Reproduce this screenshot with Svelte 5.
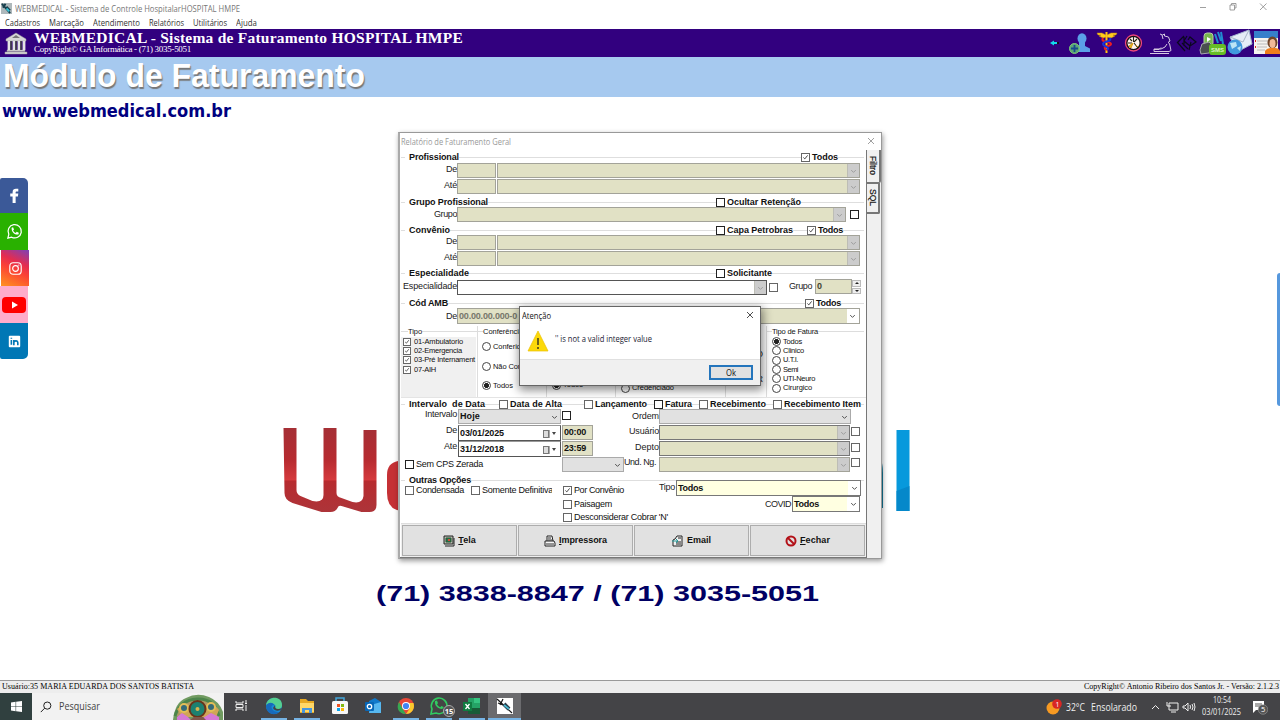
<script>
  const menus = [['Cadastros', 35], ['Marcação', 35], ['Atendimento', 47], ['Relatórios', 35], ['Utilitários', 34], ['Ajuda', 21]];
  const kinds = [['01-Ambulatorio', 49], ['02-Emergencia', 48], ['03-Pré Internament', 61], ['07-AIH', 22]];
  const bills = [['Todos', 19], ['Clinico', 21], ['U.T.I.', 15], ['Semi', 15], ['UTI-Neuro', 32], ['Cirurgico', 29]];
  const options = [['Data de Alta', 52], ['Lançamento', 52], ['Fatura', 27], ['Recebimento', 56], ['Recebimento Item', 77]];

  // Makes a label fill the given width: window chrome text is condensed, form text is letter-spaced.
  function fit(node, width) {
    const natural = node.getBoundingClientRect().width;
    if (/Open Sans|DejaVu/.test(getComputedStyle(node).fontFamily)) {
      node.style.transform = `scaleX(${width / natural})`;
      node.style.marginRight = width - natural + 'px';
    } else {
      node.style.letterSpacing = (width - natural) / node.textContent.length + 'px';
    }
  }
  function stretch(node, width) {
    node.style.transform = `scaleX(${width / node.getBoundingClientRect().width})`;
  }
</script>

{#snippet t(text, w)}<span class="t" use:fit={w}>{text}</span>{/snippet}
{#snippet cb(on = false, soft = false)}<i class="cb" class:soft={soft || on}>{#if on}<svg viewBox="0 0 10 10"><path d="M2 5l2 2 4-5" /></svg>{/if}</i>{/snippet}
{#snippet radio(on = false)}<i class="radio" class:on></i>{/snippet}
{#snippet chev()}<svg class="chev" viewBox="0 0 12 12"><path d="M3.500 5L6 7.500 8.500 5" /></svg>{/snippet}
{#snippet drop()}<span class="drop">{@render chev()}</span>{/snippet}
{#snippet pair(label, w)}
  <div class="row pair"><span class="lab">{@render t(label, w)}</span><div class="box"></div><div class="box">{@render drop()}</div></div>
{/snippet}

<div class="desktop">
  <header class="title">
    <svg class="appic" viewBox="0 0 12 12"><path fill="#aeb8bb" d="M0 0h12v12H0z" /><path d="M1 1l9 10M5 1l-3 4M6 4l4 4" stroke="#153e4c" stroke-width="2" /><path d="M6 6l3 3" stroke="#36c3d6" stroke-width="2" /></svg>
    {@render t('WEBMEDICAL - Sistema de Controle HospitalarHOSPITAL HMPE', 225)}
    <svg class="winbtns" viewBox="0 0 80 16" fill="none" stroke="#888" stroke-width=".8"><path d="M4 7.500h6M34 5h4.500v5H34zM35.500 5V3.500H40V8h-1.500M64 3.500l6.500 6.500M70.500 3.500L64 10" /></svg>
  </header>
  <nav class="menu">{#each menus as [m, w]}{@render t(m, w)}{/each}</nav>
  <div class="brand">
    <svg class="temple" viewBox="0 0 24 24"><path d="M2 8L12 2l10 6v2H2zM3 19h18v1.500H3zM1 21h22v2H1z" fill="#d8d8d8" stroke="#999" stroke-width=".5" /><path d="M5 10v9M10 10v9M15 10v9M20 10v9" stroke="#e4e4e4" stroke-width="2.800" /><path d="M7 10v9M12 10v9M17 10v9" stroke="#444" stroke-width="1.500" /><path d="M8 7l4-3 4 3z" fill="#777" /></svg>
    <div class="brandtext"><b>{@render t('WEBMEDICAL - Sistema de Faturamento HOSPITAL HMPE', 429)}</b><small>{@render t('CopyRight© GA Informática - (71) 3035-5051', 157)}</small></div>
    <svg class="tools" viewBox="1040 29 240 28">
      <path d="M1050 43l4-2.500v1.500h3v2h-3v1.500z" fill="#13d9ec" /><path d="M1057 43h2" stroke="#111" stroke-width="2" />
      <g fill="#5ba0e8"><ellipse cx="1082" cy="38.500" rx="4.500" ry="5.200" /><path d="M1079 41h6v5l5 2.500V52h-18v-2l7-4z" /></g>
      <circle cx="1074.500" cy="48.500" r="5" fill="#5aa777" stroke="#7dc77b" /><path d="M1074.500 45v7M1071 48.500h7" stroke="#17488e" stroke-width="1.800" />
      <path d="M1106 35l-4-2h-5l1 2h3l-2 1 4 2 3-1zM1107 35l4-2h6l-1 2h-3l2 1-4 2-4-1z" fill="#ffcd1c" stroke="#c18716" stroke-width=".5" /><path d="M1106.500 32v21" stroke="#ffc711" stroke-width="2" /><path d="M1103 38c-3 5 8 3 8 6s-8 1-6 5l3 1" fill="none" stroke="#ee1c22" stroke-width="2" /><path d="M1110 38c2 4-7 3-7 6s8 3 4 6" fill="none" stroke="#1635dc" stroke-width="2" />
      <circle cx="1133.500" cy="43" r="8" fill="#151015" stroke="#ec467c" stroke-width="1.300" /><circle cx="1133.500" cy="43" r="6" fill="#fff3ef" /><path d="M1133.500 37v5M1128 43h4M1134 43l4 5M1130 39l2 2M1137 39l-3 3" stroke="#221" stroke-width="1.100" /><path d="M1129 46l4-3-2 5zM1136 45l2 2" fill="#ddba20" stroke="#de9a12" />
      <path d="M1160 34l2.500 1 2-1v2l4 1 1.500 4-2 1.500 1.500 1 1.500 7-2 1h-15v-2.500h7l4-2 2-3M1150 53.500h19M1154 49.500h5l2-2M1162 35l1 4" fill="none" stroke="#d6cae2" stroke-width="1" />
      <path d="M1177 43l7-7M1178 43l7 8M1182 43l6 6M1184 37v9M1187 36l-3 5 6 5 6-4-6-5-2 3M1191 42l-2 8" fill="none" stroke="#0b071f" stroke-width="1.200" />
      <rect x="1204" y="33" width="9" height="13" rx="3" fill="#78b84d" stroke="#b6cda7" /><path d="M1207 37l4 2-4 3z" fill="#fff" /><path d="M1202 44l7-2 4 4-4 7-8 1-1-4z" fill="#4a4f50" stroke="#a6a8ac" /><path d="M1215 34l3 9M1218 32l3 9M1221 32l2 12" stroke="#218bd0" stroke-width="2" /><rect x="1209" y="44" width="17" height="11" rx="3" fill="#67bd25" /><text x="1211" y="52" font-size="6" font-weight="bold" fill="#dff5c5">SMS</text>
      <path d="M1230 37l19-7 3 14-15 8z" fill="#e5edf7" stroke="#a4b7d0" /><path d="M1230 37l13 5 6-12" fill="none" stroke="#a8b6c7" /><circle cx="1235" cy="47" r="7.500" fill="#4199dd" /><path d="M1230 43l6-1 1 4-5 3zM1237 48l4-2-1 5z" fill="#bce5f5" />
      <path d="M1254 31h24v23h-24z" fill="#f5f3ee" /><path d="M1254 31h24v7h-24z" fill="#367fcb" /><path d="M1257 41h14M1257 44h11M1257 47h10M1257 50h8" stroke="#bbb" /><path d="M1255 41h1M1255 47h1" stroke="#d22" stroke-width="2" /><ellipse cx="1272.500" cy="42.500" rx="5" ry="6" fill="#70452a" /><ellipse cx="1272.500" cy="43.500" rx="3" ry="4.500" fill="#f0b998" /><path d="M1265 54v-3q2-3 6-3h4q4 0 5 3v3z" fill="#ef7f1c" />
    </svg>
  </div>
  <div class="module"><span use:stretch={362}>Módulo de Faturamento</span></div>

  <main>
    <div class="site"><span class="t" use:fit={229}>www.webmedical.com.br</span></div>
    <aside>
      <div class="fb"><svg viewBox="0 0 20 20"><path d="M8 18v-7H5.500V8H8V6.500C8 3.800 9.500 3 11.500 3H14v2.800h-1.500c-1 0-1.300.3-1.300 1.200v1H14l-.4 3h-2.400v7z" fill="#fff" /></svg></div>
      <div class="wa"><svg viewBox="0 0 20 20"><path d="M3 17l1-4a7 7 0 1 1 3 3z" fill="none" stroke="#fff" stroke-width="1.300" /><path d="M7 6l1.500-.4 1 2.300-1 1c.6 1.300 1.500 2 2.800 2.600l1-1.200 2.200 1-.2 1.500c-3 2-8-2.500-7.300-6.800z" fill="#fff" /></svg></div>
      <div class="ig"><svg viewBox="0 0 20 20" fill="none" stroke="#fff" stroke-width="1.200"><rect x="4" y="4" width="12" height="12" rx="3.500" /><circle cx="10" cy="10" r="3" /><path d="M13 6.500h1" /></svg></div>
      <div class="yt"><svg viewBox="0 0 24 20"><rect y="2" width="24" height="16" rx="4" fill="#f00" /><path d="M10 6.500l6 3.500-6 3.500z" fill="#fff" /></svg></div>
      <div class="li"><svg viewBox="0 0 20 20"><rect x="4" y="4" width="12" height="12" rx="1" fill="#fff" /><path d="M6.700 8.500v5M6.700 6v1.200M9.300 14V8.500M9.500 10.500c.5-1.700 4-1.700 4 .7V14" fill="none" stroke="#0077b5" stroke-width="1.700" /></svg></div>
    </aside>
    <svg class="logo" viewBox="270 420 660 100">
      <defs><linearGradient id="r" x1="0" y1="0" x2="0" y2="1"><stop offset="0" stop-color="#a52f35" /><stop offset=".38" stop-color="#b72b30" /><stop offset=".62" stop-color="#d53a3d" /><stop offset=".63" stop-color="#b72b2f" /><stop offset="1" stop-color="#ad3439" /></linearGradient></defs>
      <path d="M283.500 428h13v62q0 4 4 6l12 5q11 2 11-6v-67h13v65q0 4 5 5l11 4q10 2 11-6v-66h13v75q0 7-7 7h-8l-20-6q-3-1-4 2-2 4-7 4h-9l-29-9q-8-3-8-10z" fill="url(#r)" />
      <path d="M410 461h-12q-11 2-11 14v18q0 17 15 18h8z" fill="#c53135" /><path d="M878 458h2q3 5 3 15v35h-5z" fill="#147a9a" />
      <path d="M896.500 430h13v81h-13z" fill="#0799dc" /><path d="M896.500 491l13-5v25h-13z" fill="#0588ca" />
    </svg>
    <div class="phone"><span use:stretch={443}>(71) 3838-8847 / (71) 3035-5051</span></div>
    <div class="edge"></div>
  </main>

  <section class="window">
    <div class="wtitle">{@render t('Relatório de Faturamento Geral', 110)}<svg viewBox="0 0 10 10"><path d="M2 2l6 6M8 2L2 8" /></svg></div>
    <div class="wbody">
      <div class="page">
        <div class="legend"><b>{@render t('Profissional', 50)}</b><div class="opt at801">{@render cb(true)}<b>{@render t('Todos', 26)}</b></div></div>
        {@render pair('De', 11)}{@render pair('Até', 13)}
        <div class="legend g2"><b>{@render t('Grupo Profissional', 79)}</b><div class="opt at716">{@render cb()}<b>{@render t('Ocultar Retenção', 74)}</b></div></div>
        <div class="row group"><span class="lab">{@render t('Grupo', 23)}</span><div class="box">{@render drop()}</div>{@render cb()}</div>
        <div class="legend g2"><b>{@render t('Convênio', 41)}</b><div class="opt at716">{@render cb()}<b>{@render t('Capa Petrobras', 66)}</b></div><div class="opt gap14">{@render cb(true)}<b>{@render t('Todos', 25)}</b></div></div>
        {@render pair('De', 11)}{@render pair('Até', 13)}
        <div class="legend g4"><b>{@render t('Especialidade', 60)}</b><div class="opt at716">{@render cb()}<b>{@render t('Solicitante', 45)}</b></div></div>
        <div class="row spec"><span class="lab">{@render t('Especialidade', 54)}</span><div class="box white">{@render drop()}</div>{@render cb(false, true)}<span class="lab">{@render t('Grupo', 23)}</span><div class="box num"><b>0</b></div><div class="spin"><i></i><i></i></div></div>
        <div class="legend g5"><b>{@render t('Cód AMB', 39)}</b><div class="opt at805">{@render cb(true)}<b>{@render t('Todos', 25)}</b></div></div>
        <div class="row amb"><span class="lab">{@render t('De', 11)}</span><div class="box"><b class="dim">{@render t('00.00.00.000-0', 58)}</b></div><div class="box light">{@render drop()}</div></div>

        <div class="panels">
          <div class="panel kinds"><h5>{@render t('Tipo', 14)}</h5><div class="list">{#each kinds as [k, w]}<div class="opt">{@render cb(true)}{@render t(k, w)}</div>{/each}</div></div>
          <div class="panel conf"><h5>{@render t('Conferência', 40)}</h5><div class="opt">{@render radio()}{@render t('Conferido', 32)}</div><div class="opt">{@render radio()}{@render t('Não Conferido', 47)}</div><div class="opt">{@render radio(true)}{@render t('Todos', 20)}</div></div>
          <div class="panel low"><div class="opt">{@render radio(true)}{@render t('Todos', 20)}</div></div>
          <div class="panel low cred"><div class="opt">{@render radio()}{@render t('Credenciado', 42)}</div></div>
          <div class="panel letters"><span>O</span><span>R</span></div>
          <div class="panel bills"><h5>{@render t('Tipo de Fatura', 46)}</h5>{#each bills as [k, w], i}<div class="opt">{@render radio(i === 0)}{@render t(k, w)}</div>{/each}</div>
        </div>

        <div class="legend dates"><b>{@render t('Intervalo\u00a0 de Data', 76)}</b>{#each options as [o, w], i}<div class="opt o{i}">{@render cb(false, i !== 2)}<b>{@render t(o, w)}</b></div>{/each}</div>
        <div class="row range"><span class="lab up">{@render t('Intervalo', 32)}</span><div class="box gray"><b>{@render t('Hoje', 20)}</b>{@render chev()}</div>{@render cb()}<span class="lab">{@render t('Ordem', 27)}</span><div class="box gray">{@render chev()}</div></div>
        {#each [['De', 11, '03/01/2025', '00:00', 'Usuário', 30], ['Ate', 13, '31/12/2018', '23:59', 'Depto', 24]] as [a, aw, date, time, b, bw]}
          <div class="row date"><span class="lab up">{@render t(a, aw)}</span><div class="box white"><b>{@render t(date, 44)}</b><i class="cal"></i><i class="tri"></i></div><div class="box tm"><b>{@render t(time, 22)}</b></div><span class="lab">{@render t(b, bw)}</span><div class="box dark">{@render drop()}</div>{@render cb(false, true)}</div>
        {/each}
        <div class="row cps"><div class="opt">{@render cb()}{@render t('Sem CPS Zerada', 67)}</div><div class="box gray">{@render chev()}</div><span class="lab">{@render t('Und. Ng.', 32)}</span><div class="box">{@render drop()}</div>{@render cb(false, true)}</div>
        <div class="legend last"><b>{@render t('Outras Opções', 62)}</b></div>
        <div class="row out1"><div class="opt">{@render cb(false, true)}{@render t('Condensada', 48)}</div><div class="opt">{@render cb(false, true)}{@render t('Somente Definitiva', 71)}</div><div class="opt">{@render cb(true)}{@render t('Por Convênio', 50)}</div><span class="lab">{@render t('Tipo', 16)}</span><div class="box yellow"><b>{@render t('Todos', 25)}</b>{@render chev()}</div></div>
        <div class="row out2"><div class="opt">{@render cb(false, true)}{@render t('Paisagem', 38)}</div><span class="lab">{@render t('COVID', 26)}</span><div class="box yellow"><b>{@render t('Todos', 25)}</b>{@render chev()}</div></div>
        <div class="row out3"><div class="opt">{@render cb(false, true)}{@render t("Desconsiderar Cobrar 'N'", 94)}</div></div>
        <div class="buttons">
          <button><svg viewBox="0 0 12 12"><path d="M1 1h9v8H1z" fill="#b9bbb0" stroke="#222" /><path d="M3 3h5v4H3z" fill="#27754f" stroke="#275b35" /><path d="M5 4h2v2H5z" fill="#d74a35" /><path d="M2 11h9V3" fill="none" stroke="#222" /></svg><span><u>T</u>ela</span></button>
          <button><svg viewBox="0 0 12 12"><path d="M3 6V1h5l1 5M1 6h9l1 2v3H1z" fill="#f5f5f5" stroke="#222" /><path d="M4 3h3M4 5h4M2 9h8" stroke="#333" /></svg><span class="t" use:fit={48}><u>I</u>mpressora</span></button>
          <button><svg viewBox="0 0 12 12"><path d="M3 4l2-3h5v10H1V5z" fill="#eee" stroke="#222" /><path d="M4 7h5M4 9h5M6 3h3" fill="none" stroke="#222" /><path d="M0 6h5M4 4l2 2-2 2" fill="none" stroke="#269b9a" /></svg><span>{@render t('Email', 24)}</span></button>
          <button><svg viewBox="0 0 12 12"><circle cx="6" cy="6" r="4.500" fill="none" stroke="#b31118" stroke-width="2" /><path d="M3 3l6 6" stroke="#b31118" stroke-width="2" /></svg><span class="t" use:fit={30}><u>F</u>echar</span></button>
        </div>
      </div>
      <div class="tabs"><div class="tab active"><span>Filtro</span></div><div class="tab"><span>SQL</span></div></div>
    </div>
  </section>

  <section class="dialog">
    <div class="dtitle">{@render t('Atenção', 29)}<svg viewBox="0 0 10 10"><path d="M2 2l6 6M8 2L2 8" /></svg></div>
    <div class="msg"><svg viewBox="0 0 22 22"><path d="M11 1l10 20H1z" fill="#fcd90a" stroke="#edc000" stroke-width=".7" /><path d="M11 8v7M11 17v2" stroke="#222" stroke-width="1.300" /></svg>{@render t("'' is not a valid integer value", 97)}</div>
    <div class="foot"><button>{@render t('Ok', 10)}</button></div>
  </section>

  <div class="status"><div>{@render t('Usuário:35 MARIA EDUARDA DOS SANTOS BATISTA', 192)}</div><div>{@render t('CopyRight© Antonio Ribeiro dos Santos Jr. - Versão: 2.1.2.3', 195)}</div></div>
  <footer>
    <div class="start"><svg viewBox="0 0 12 12" fill="#fff"><path d="M0 1.500l5-.7v4.800H0zM5.600.7L12 0v5.600H5.600zM0 6.200h5v4.900l-5-.7zM5.600 6.200H12V12l-6.400-.8z" /></svg></div>
    <div class="search"><svg class="mag" viewBox="0 0 12 12"><circle cx="7.300" cy="4.600" r="3.600" fill="none" stroke="#222" /><path d="M4.700 7.200L.8 11.100" stroke="#222" /></svg>{@render t('Pesquisar', 41)}
      <svg class="scene" viewBox="0 0 52 26"><path d="M1 26Q3 8 14 4 25-2 37 3q10 4 14 15v8z" fill="#719b61" /><path d="M3 22Q8 6 25 5t22 17" fill="#ac9963" stroke="#4c854b" stroke-width="3" /><path d="M5 15q8-7 15-3 5-8 14 0 8-4 13 4l-3 7H10z" fill="#d0a557" /><g stroke="#795b28"><circle cx="12" cy="14" r="4" fill="#356b78" stroke="#e3be59" stroke-width="2" /><circle cx="39" cy="13" r="4" fill="#356b78" stroke="#e3be59" stroke-width="2" /><circle cx="25.500" cy="15" r="8" fill="#1d8170" stroke="#69351a" stroke-width="2" /></g><circle cx="25.500" cy="15" r="2" fill="#d8b550" /><path d="M5 23l5-4 6 4 3 3H5zM31 24l8-5 8 4v3H31z" fill="#d579d6" /><path d="M18 26l4-3h9l3 3z" fill="#81574b" /></svg>
    </div>
    <div class="apps">
      <div><svg viewBox="0 0 20 20" fill="none" stroke="#eee"><path d="M5 5v2h7V5M5 15v-2h7v2M5 8.500h7v3H5zM15 4v3M15 9v6M14 7.500h2" /></svg></div>
      <div class="run"><svg viewBox="0 0 20 20"><circle cx="10" cy="10" r="8" fill="#168bd5" /><path d="M2 9C4-1 18 0 18 9c0 5-6 5-7 3 3-3-4-7-9-3" fill="#55cf91" /><path d="M2 10c2-4 7-4 8-1-5 0-2 8 5 7-5 5-13 1-13-6" fill="#176abc" /><path d="M11 9c-1 4 3 5 7 3-1 3-7 4-9 0z" fill="#444" /></svg></div>
      <div class="run"><svg viewBox="0 0 20 20"><path d="M3 3h6l2 2h6v12H3z" fill="#e7a822" /><path d="M3 7h14v9H3z" fill="#ffd767" /><path d="M5 17v-5h10v5h-3v-3H8v3z" fill="#4696dd" /></svg></div>
      <div><svg viewBox="0 0 20 20"><path d="M6 6V2h8v4" fill="none" stroke="#43a6dc" stroke-width="1.500" /><rect x="2" y="5" width="16" height="13" rx="1.500" fill="#f7f7f7" /><path d="M7 8h3v3H7z" fill="#f05323" /><path d="M11 8h3v3h-3z" fill="#80b913" /><path d="M7 12h3v3H7z" fill="#05a5ee" /><path d="M11 12h3v3h-3z" fill="#ffba08" /></svg></div>
      <div><svg viewBox="0 0 20 20"><path d="M6 5l6-3 6 4v11H6z" fill="#1179ca" /><path d="M8 9l10-3v11H6z" fill="#57b7ef" /><rect x="2" y="6" width="9" height="9" rx="1" fill="#0867b7" /><circle cx="6.500" cy="10.500" r="2.200" fill="none" stroke="#fff" stroke-width="1.300" /></svg></div>
      <div class="run"><svg viewBox="0 0 20 20"><circle cx="10" cy="10" r="8" fill="#e84738" /><path d="M3 6l5 9 2 3c-8 0-10-7-7-12" fill="#36a852" /><path d="M10 7h7.500c2 6-2 11-7.500 11l4-6z" fill="#fbc92d" /><circle cx="10" cy="10" r="4" fill="#fff" /><circle cx="10" cy="10" r="3.100" fill="#4285f4" /></svg></div>
      <div class="run"><svg viewBox="0 0 20 20"><path d="M2 18l1-5a7.800 7.800 0 1 1 4 4z" fill="#454545" stroke="#31cc61" stroke-width="1.600" /><path d="M6 5l2-.4 1 2.600-1 1c.7 1.500 1.800 2.300 3.300 3l1-1.300 2.400 1.200c0 4-10 1-8.700-6.100z" fill="#31cc61" /></svg><em>15</em></div>
      <div class="run"><svg viewBox="0 0 20 20"><path d="M6 2h12v16H6z" fill="#25a366" /><path d="M12 2h6v5h-6z" fill="#36c481" /><path d="M6 12h12v6H6z" fill="#185c37" /><path d="M1 6h9v9H1z" fill="#107c41" /><path d="M3.500 8l4 5M7.500 8l-4 5" stroke="#fff" stroke-width="1.300" /></svg></div>
      <div class="run active"><svg viewBox="0 0 20 20"><path d="M2 2h16v16H2z" fill="#fff" /><path d="M2 3l15 14M8 3L5 9M3 7l5 2" stroke="#171717" stroke-width="1.200" /><path d="M9 8l5 5" stroke="#293b48" stroke-width="4" /><path d="M9 9l5 4" stroke="#49b9d0" stroke-width="1.700" /></svg></div>
    </div>
    <div class="tray">
      <svg class="sun" viewBox="0 0 16 16"><circle cx="7" cy="9" r="6.500" fill="#f79a22" /><circle cx="11" cy="5" r="4.800" fill="#d82624" /><text x="9.600" y="7.500" font-size="7" fill="#fff">1</text></svg>
      {@render t('32°C', 19)}<span class="wx">{@render t('Ensolarado', 46)}</span>
      <svg class="sys" viewBox="0 0 46 14" fill="none" stroke="#eee"><path d="M1 9l3.500-3.500L8 9M18 3h9v7h-9zM16 2v4h4M20 12h5M32 6h2l3-3v8l-3-3h-2zM39 5q1 2 0 4M41 4q2 3 0 6M43 3q2 4 0 8" /></svg>
      <div class="clock"><div>{@render t('10:54', 18)}</div><div>{@render t('03/01/2025', 39)}</div></div>
      <div class="note"><svg viewBox="0 0 16 16"><path d="M1 2h11v9H4l-3 3z" fill="#fff" /><path d="M3 5h7M3 7h7" stroke="#555" /><circle cx="11" cy="10.500" r="4.800" fill="#555" stroke="#aaa" stroke-width=".5" /><text x="9" y="13.300" font-size="7.500" fill="#fff">5</text></svg></div>
    </div>
  </footer>
</div>

<style>
  :global(body) { overflow: hidden; }
  * { box-sizing: border-box; }
  .desktop { position: relative; width: 1280px; height: 720px; display: flex; flex-direction: column; background: #fff; font-family: "Liberation Sans", sans-serif; color: #111; overflow: hidden; line-height: 1; }
  .desktop svg { display: block; flex: none; }
  .t { white-space: nowrap; display: inline-block; flex: none; transform-origin: left; }
  .title { height: 15px; display: flex; align-items: center; gap: 3px; font: 9px/1 "Open Sans", sans-serif; color: #777; padding-top: 1px; }
  .appic { width: 11px; height: 11px; margin-left: 1px; }
  .winbtns { width: 80px; height: 16px; margin-left: auto; }
  .desktop .winbtns { margin-right: 4px; }
  .menu { height: 14px; display: flex; align-items: center; gap: 9px; padding-left: 5px; font: 9px/1 "Open Sans", sans-serif; color: #333; }
  .brand { height: 28px; background: #32007f; display: flex; color: #fff; font-family: "Liberation Serif", serif; padding-left: 4px; }
  .temple { width: 24px; height: 24px; margin-top: 2px; }
  .brandtext { display: flex; flex-direction: column; padding-left: 6px; }
  .brandtext b { font-size: 15.5px; line-height: 17px; height: 16px; }
  .brandtext small { font-size: 9px; line-height: 9px; }
  .tools { width: 240px; height: 28px; margin-left: auto; font-family: "Liberation Sans", sans-serif; }
  .module { height: 40px; background: #a6c9ef; color: #fff; font: bold 32.5px/39px "Liberation Sans", sans-serif; padding-left: 3px; text-shadow: 1px 2px 1px #777; }
  .module span, .phone span { display: inline-block; transform-origin: left; white-space: nowrap; }
  main { flex: 1; position: relative; }
  .site { font: bold 17px/20px "DejaVu Sans", sans-serif; color: #000080; padding: 4px 0 0 2px; height: 81px; }
  aside { width: 29px; }
  aside div { width: 28px; height: 36px; display: flex; align-items: center; justify-content: center; }
  aside svg { width: 19px; height: 19px; }
  .fb { background: #3b5998; height: 35px; border-top-right-radius: 5px; border-top-left-radius: 2px; }
  .wa { background: #29b100; height: 37px; }
  .ig { margin-left: 1px; background: linear-gradient(25deg, #ff941f, #fb4135 45%, #e42c50 65%, #7c42b7); }
  .yt { background: #ffaccb; height: 37px; }
  .yt svg { width: 24px; height: 20px; }
  .li { background: #0077b5; border-radius: 0 0 5px 2px; }
  .logo { position: absolute; left: 270px; top: 323px; width: 660px; height: 100px; }
  .phone { position: absolute; left: 376px; top: 485px; font: bold 22px/24px "Liberation Sans", sans-serif; color: #000064; }
  .edge { position: absolute; right: 0; top: 176px; width: 3px; height: 133px; background: #5698dd; border-radius: 3px 0 0 3px; }

  .window { position: absolute; left: 398px; top: 132px; width: 484px; height: 427px; background: #f0f0f0; border: 1px solid #999; border-left: 2px solid #aaa; box-shadow: 1px 2px 5px #0006; display: flex; flex-direction: column; font-size: 9px; }
  .wtitle { height: 17px; background: #fff; display: flex; justify-content: space-between; align-items: center; padding: 0 5px 1px 1px; font: 9px/1 "Open Sans", sans-serif; color: #999; }
  .wtitle svg, .dtitle svg { width: 10px; height: 10px; fill: none; stroke: #888; stroke-width: .8; }
  .dtitle svg { stroke: #222; }
  .wbody { flex: 1; display: flex; }
  .page { width: 467px; padding-top: 2px; padding-left: 1px; background: #fff; border-right: 1px solid #777; border-bottom: 1px solid #777; }
  .legend { height: 11px; display: flex; align-items: center; padding-left: 4px; background: linear-gradient(#dedede, #dedede) 0 50% / 463px 1px no-repeat; position: relative; }
  .legend > b, .legend .opt { background: #fff; padding-left: 4px; z-index: 1; }
  .legend .opt { padding-left: 0; margin-left: auto; }
  .g2 { height: 10px; margin-top: 2px; }
  .g4 { margin-top: 1px; height: 11px; }
  .g5 { margin-top: 3px; height: 10px; }
  .at801 { margin-right: 28px; }
  .legend .at716 { position: absolute; left: 315px; }
  .at805 { margin-right: 25px; }
  .legend .gap14 { margin-right: 23px; }
  .opt { display: flex; align-items: center; gap: 1px; height: 10px; white-space: nowrap; }
  .cb { width: 9px; height: 9px; border: 1px solid #222; background: #fff; flex: none; display: block; margin-right: 1px; }
  .cb.soft { border-color: #666; }
  .cb svg { width: 7px; height: 7px; fill: none; stroke: #333; stroke-width: 1.3; }
  .radio { width: 9px; height: 9px; border: 1px solid #444; border-radius: 50%; background: #fff; flex: none; }
  .radio.on { background: radial-gradient(#222 0 2.2px, #fff 2.8px); }
  .row { height: 16px; display: grid; align-items: center; white-space: nowrap; }
  .lab { text-align: right; color: #222; justify-self: end; display: flex; padding-bottom: 3px; }
  .lab.up { padding: 0 1px 5px 0; }
  .box { height: 15px; background: #e1e1c5; border: 1px solid #a3a399; display: flex; align-items: center; padding-left: 1px; position: relative; min-width: 0; align-self: start; }
  .drop { margin-left: auto; width: 12px; align-self: stretch; background: #ccc; display: flex; align-items: center; border-left: 1px solid #bdbdb5; }
  .chev { width: 11px; height: 12px; fill: none; stroke: #999; stroke-width: 1; }
  .box > .chev { margin-left: auto; stroke: #444; }
  .white { background: #fff; border-color: #555; }
  .gray { background: #e1e1e1; border-color: #aaa; }
  .dark { border-color: #777; }
  .pair { grid-template-columns: 57px 39px 363px; column-gap: 1px; margin-left: -2px; }
  .pair .lab { margin-right: -1px; }
  .group { grid-template-columns: 56px 389px 14px; }
  .group .cb { margin-left: 4px; margin-top: -2px; }
  .group .lab { padding-bottom: 2px; }
  .spec { grid-template-columns: 56px 310px 10px 35px 37px 9px; }
  .spec .cb { margin-left: 2px; }
  .spec .lab { padding-bottom: 2px; }
  .spec .white { margin-top: 1px; }
  .spec .num { margin-left: 3px; margin-right: -3px; }
  .spec .spin { margin-left: 3px; }
  .num b { color: #443; }
  .spin { height: 14px; display: flex; flex-direction: column; gap: 1px; width: 9px; }
  .spin i { flex: 1; background: #eee; border: 1px solid #bbb; display: flex; align-items: center; justify-content: center; }
  .spin i::after { content: ''; border: 2px solid transparent; border-bottom: 2px solid #222; border-top: 0; }
  .spin i:last-child::after { transform: rotate(180deg); }
  .amb { grid-template-columns: 56px 80px 323px; }
  .amb .lab { padding-bottom: 0; }
  .amb .box { height: 16px; }
  .dim { color: #77776b; }
  .light .drop { background: #fff; border: 0; }
  .light .chev { stroke: #444; }
  .panels { height: 72px; margin-top: 2px; display: grid; grid-template-columns: 77px 69px 69px 110px 41px 97px; font-size: 7.5px; border-bottom: 1px solid #e4e4e4; }
  .panel { border-right: 1px solid #ddd; min-width: 0; }
  .panel:last-child { border: 0; }
  .panel h5 { margin: 0; height: 11px; font-size: 7.5px; font-weight: normal; line-height: 11px; padding-left: 5px; background: linear-gradient(#ddd, #ddd) 0 50% / 100% 1px no-repeat; }
  .panel h5 .t { background: #fff; }
  .kinds h5 { padding-left: 7px; }
  .list { background: #f0f0f0; height: 60px; padding-left: 2px; margin-right: 1px; overflow: hidden; }
  .list .opt { height: 9.3px; gap: 2px; }
  .list .cb { width: 8px; height: 8px; }
  .list .cb svg { width: 6px; height: 6px; }
  .conf .opt { height: 19.5px; gap: 2px; margin-left: 4px; }
  .low { display: flex; align-items: flex-end; padding: 0 0 7px 5px; }
  .cred { padding-bottom: 4px; }
  .low .opt { gap: 2px; }
  .letters { display: flex; flex-direction: column; align-items: flex-end; padding: 24px 3px 0 0; gap: 16px; font-size: 9px; }
  .bills .opt { height: 9.3px; margin-left: 5px; gap: 2px; }
  .dates { margin-top: 1px; height: 10px; }
  .dates .opt { margin-left: 9px; }
  .dates .o0 { margin-left: 14px; }
  .dates .o1 { margin-left: 22px; }
  .dates .o2, .dates .o3, .dates .o4 { margin-left: 7px; }
  .range { grid-template-columns: 57px 103px 10px 88px 192px; }
  .range .cb { margin-left: 1px; margin-top: -3px; }
  .range .lab:not(.up) { padding-bottom: 1px; }
  .date { grid-template-columns: 57px 103px 32px 66px 191px 10px; }
  .date .tm { margin-left: 1px; }
  .date .cb { margin-left: 1px; margin-top: -3px; }
  .date .white { border-top-color: #999; padding-top: 1px; height: 16px; }
  .cal { width: 6px; height: 8px; border: 1px solid #777; background: #ddd; margin-left: auto; box-shadow: 1px 0 #aaa; }
  .tri { border: 2.5px solid transparent; border-top: 3px solid #444; border-bottom: 0; margin: 0 4px 0 3px; }
  .cps { grid-template-columns: 161px 62px 35px 191px 10px; }
  .cps .opt { margin-left: 4px; margin-top: -1px; }
  .cps > .cb { margin-left: 1px; margin-top: -5px; }
  .cps .lab { padding: 0 3px 5px 0; justify-self: end; }
  .last { margin-top: 2px; height: 10px; }
  .out1 { margin-top: -5px; height: 16px; grid-template-columns: 70px 92px 87px 26px 185px; }
  .out1 .opt { margin-top: 4px; overflow: hidden; }
  .out1 .opt:first-child { margin-left: 4px; }
  .out1 .opt:nth-child(2) { margin-right: 11px; }
  .out1 .lab { padding: 0 1px 1px 0; }
  .yellow { background: linear-gradient(90deg, #ffffe1 0 calc(100% - 12px), #fff 0); border-color: #777; height: 16px; }
  .out2 { height: 15px; grid-template-columns: 229px 68px; padding-left: 162px; }
  .out2 .opt { grid-column: 1; grid-row: 1; }
  .out2 .lab { grid-column: 1; grid-row: 1; padding: 0 1px 0 0; }
  .out3 { height: 12px; padding-left: 162px; }
  .buttons { display: grid; grid-template-columns: repeat(4, 1fr); gap: 1px; border-top: 1px solid #ddd; padding: 1px 1px 1px 1px; background: #eee; height: 34px; }
  .buttons button { background: #e1e1e1; border: 1px solid #adadad; font: bold 9px/1 "Liberation Sans", sans-serif; display: flex; align-items: center; justify-content: center; gap: 3px; padding: 0; color: #111; }
  .buttons button svg { width: 12px; height: 12px; }
  .tabs { width: 14px; font-size: 8.5px; -webkit-text-stroke: .2px #111; }
  .tab { height: 31px; display: flex; justify-content: center; align-items: center; border-right: 2px solid #777; border-bottom: 1px solid #777; border-radius: 0 0 2px 0; width: 13px; }
  .tab.active { height: 33px; width: 14px; padding-bottom: 2px; }
  .tab span { writing-mode: vertical-rl; }
  .tab:last-child { align-items: flex-start; padding-top: 5px; border-bottom-width: 2px; border-top: 1px solid #777; }

  .dialog { position: absolute; left: 519px; top: 306px; width: 242px; height: 80px; border: 1px solid #666; background: #fff; box-shadow: 1px 3px 9px 1px #0007; display: flex; flex-direction: column; font: 9px/1 "Open Sans", sans-serif; }
  .dtitle { height: 16px; display: flex; align-items: center; justify-content: space-between; padding: 0 5px 0 2px; }
  .msg { height: 36px; display: flex; gap: 6px; padding: 7px 0 0 7px; color: #223; }
  .msg svg { width: 22px; height: 22px; }
  .msg .t { margin-top: 4px; }
  .foot { flex: 1; background: #f0f0f0; border-top: 1px solid #e0e0e0; display: flex; align-items: center; justify-content: flex-end; padding-right: 7px; }
  .foot button { width: 44px; height: 15px; border: 2px solid #2475bc; background: #e1e1e1; padding: 0; font: 9px/10px "Open Sans", sans-serif; color: #111; }

  .status { height: 13px; background: #ededed; border-top: 1px solid #999; display: flex; justify-content: space-between; align-items: center; padding: 0 1px 0 2px; font: 8px/1 "Liberation Serif", serif; color: #000; }
  footer { height: 27px; background: #444447; display: flex; color: #eee; font: 10px/1 "Open Sans", sans-serif; }
  .start { width: 32px; background: #30403f; display: flex; align-items: center; justify-content: center; }
  .start svg { width: 11px; height: 11px; }
  .search { width: 192px; background: #f2f2f2; color: #444; display: flex; align-items: center; padding-left: 8px; font-size: 10.5px; }
  .mag { width: 12px; height: 12px; margin-right: 7px; }
  .scene { width: 52px; height: 26px; margin-left: auto; }
  .apps { display: flex; }
  .apps div { width: 33px; height: 27px; display: flex; align-items: center; justify-content: center; border-bottom: 2px solid transparent; background-clip: padding-box; position: relative; }
  .apps svg { width: 20px; height: 20px; }
  .apps .run::after { content: ''; position: absolute; bottom: -2px; left: 4px; right: 3px; height: 2px; background: #76b3e4; }
  .apps .active { background: #6b6b6e; }
  .apps .active::after { left: 0; right: 0; }
  .apps em { position: absolute; right: 0; bottom: 1px; width: 12px; height: 12px; border-radius: 50%; background: #555; border: .5px solid #aaa; font: bold 7.5px/10px "Open Sans", sans-serif; text-align: center; color: #fff; }
  .tray { margin-left: auto; display: flex; align-items: center; width: 234px; }
  .sun { width: 16px; height: 16px; margin-right: 4px; }
  .wx { margin-left: 6px; }
  .sys { width: 46px; height: 14px; margin-left: 14px; }
  .clock { width: 45px; margin-left: 2px; text-align: center; font-size: 8.5px; line-height: 12px; margin-top: -2px; }
  .clock div { height: 12px; }
  .note { margin-left: 8px; }
  .note svg { width: 16px; height: 16px; }
</style>
